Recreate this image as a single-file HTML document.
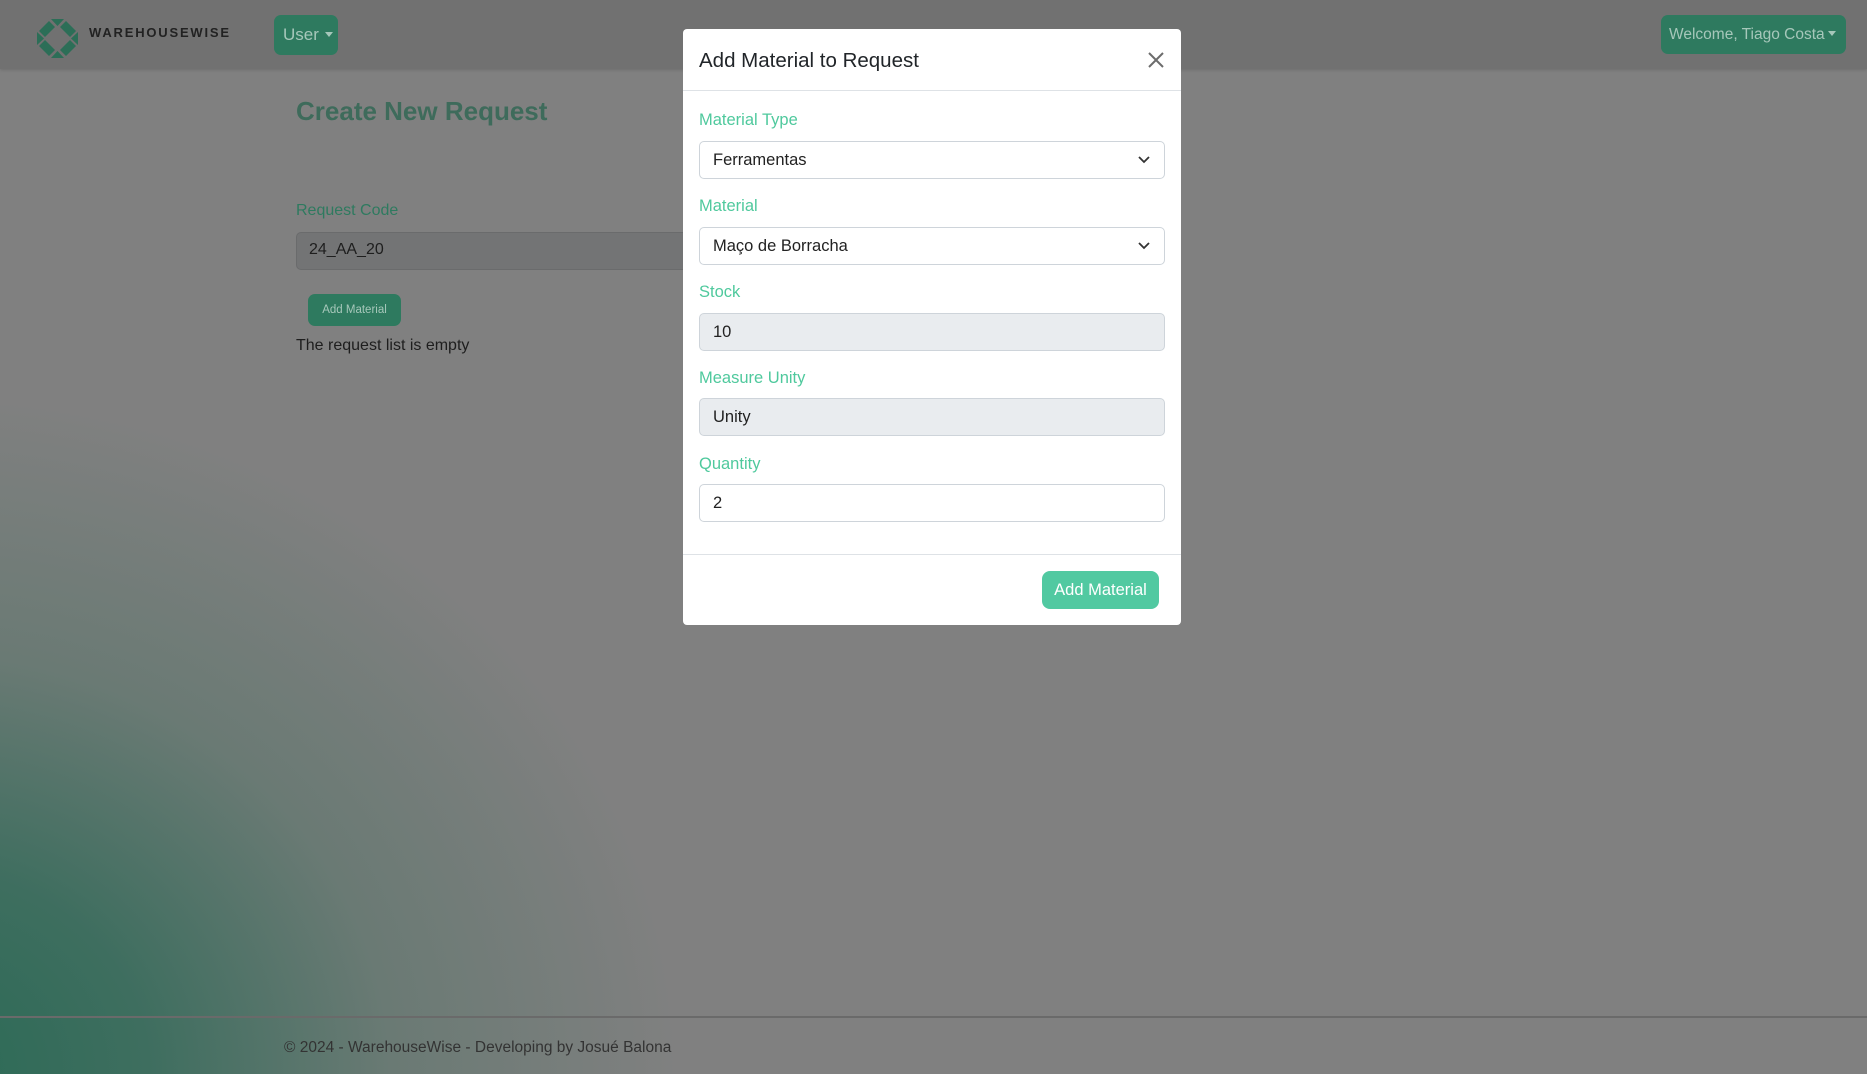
<!DOCTYPE html>
<html><head><meta charset="utf-8"><style>
*{box-sizing:border-box;margin:0;padding:0}
body{width:1867px;height:1074px;overflow:hidden;position:relative;font-family:"Liberation Sans",sans-serif;background:#808080}
.grad{position:absolute;left:0;top:0;width:1867px;height:1074px;background:radial-gradient(ellipse 760px 680px at -80px 1074px,#2a6a55 0%,#3e6e5f 30%,#6a7a74 62%,rgba(128,128,128,0) 100%)}
.nav{position:absolute;left:0;top:0;width:1867px;height:69px;background:#717171;box-shadow:0 1px 3px rgba(0,0,0,.15)}
.btn{position:absolute;background:#2e7a5f;color:#a6c7ba;border-radius:7px;font-size:17px;line-height:40px;padding:0 9px;white-space:nowrap}
.car{display:inline-block;width:0;height:0;border-left:4px solid transparent;border-right:4px solid transparent;border-top:5px solid #a6c7ba;vertical-align:3px;margin-left:6px}
.t{position:absolute;white-space:nowrap}
.foot{position:absolute;left:0;top:1016px;width:1867px;height:2px;background:#6a6a6a}
.modal{position:absolute;left:683px;top:29px;width:498px;height:596px;background:#fff;border-radius:4px}
.mh{height:62px;border-bottom:1px solid #dee2e6;position:relative}
.lbl{position:absolute;left:16px;color:#4fc99d;font-size:16.5px}
.inp{position:absolute;left:16px;width:466px;height:38px;border:1px solid #ced4da;border-radius:5px;font-size:16.5px;color:#222;padding-left:13px;line-height:36px;background:#fff}
.dis{background:#e9ecef}
</style></head><body>
<div class="grad"></div>
<div class="nav">
<svg style="position:absolute;left:37px;top:19px" width="41" height="39" viewBox="0 0 41 39"><g fill="#2c6e57"><path d="M14 0H27L20.5 7ZM0 13V26L7 19.5ZM41 13V26L34 19.5ZM14 39H27L20.5 32Z"/><path d="M12 2L2 12 8 18 18 8Z M29 2L39 12 33 18 23 8Z M12 37L2 27 8 21 18 31Z M29 37L39 27 33 21 23 31Z"/></g></svg>
<div class="t" style="left:89px;top:25px;font-size:13px;font-weight:bold;letter-spacing:1.8px;color:#222">WAREHOUSEWISE</div>
<div class="btn" style="left:274px;top:15px;height:40px;width:64px">User<span class="car"></span></div>
<div class="btn" style="left:1661px;top:15px;height:39px;width:185px;font-size:15.5px;padding:0 8px">Welcome, Tiago Costa<span class="car" style="margin-left:3px"></span></div>
</div>
<div class="t" style="left:296px;top:96px;font-size:26px;font-weight:bold;color:#3e6b5b">Create New Request</div>
<div class="t" style="left:296px;top:202px;font-size:16px;color:#2e7a5f">Request Code</div>
<div style="position:absolute;left:296px;top:232px;width:700px;height:38px;background:#737475;border:1px solid #6a6b6c;border-radius:5px"></div>
<div class="t" style="left:309px;top:241px;font-size:16px;color:#1e1e1e">24_AA_20</div>
<div class="btn" style="left:308px;top:294px;height:32px;line-height:32px;font-size:11.5px;padding:0 12px;width:93px;text-align:center">Add Material</div>
<div class="t" style="left:296px;top:337px;font-size:16px;color:#1e1e1e">The request list is empty</div>
<div class="foot"></div>
<div class="t" style="left:284px;top:1039px;font-size:15.5px;color:#333">© 2024 - WarehouseWise - Developing by Josué Balona</div>
<div class="modal">
<div class="mh"><div class="t" style="left:16px;top:20px;font-size:20.5px;color:#212529">Add Material to Request</div>
<svg style="position:absolute;left:465px;top:23px" width="16" height="16" viewBox="0 0 16 16"><path d="M1 1L15 15M15 1L1 15" stroke="#6c6c6c" stroke-width="2"/></svg></div>
<div class="lbl" style="top:82px">Material Type</div>
<div class="inp" style="top:112px">Ferramentas<svg style="position:absolute;right:14px;top:14px" width="12" height="8" viewBox="0 0 12 8"><path d="M1 1L6 6 11 1" stroke="#333" stroke-width="1.8" fill="none"/></svg></div>
<div class="lbl" style="top:168px">Material</div>
<div class="inp" style="top:198px">Maço de Borracha<svg style="position:absolute;right:14px;top:14px" width="12" height="8" viewBox="0 0 12 8"><path d="M1 1L6 6 11 1" stroke="#333" stroke-width="1.8" fill="none"/></svg></div>
<div class="lbl" style="top:254px">Stock</div>
<div class="inp dis" style="top:284px">10</div>
<div class="lbl" style="top:340px">Measure Unity</div>
<div class="inp dis" style="top:369px">Unity</div>
<div class="lbl" style="top:426px">Quantity</div>
<div class="inp" style="top:455px">2</div>
<div style="position:absolute;left:0;top:525px;width:498px;height:1px;background:#dee2e6"></div>
<div style="position:absolute;left:359px;top:542px;width:117px;height:38px;background:#51c9a1;border-radius:8px;color:#fff;font-size:16.5px;line-height:38px;text-align:center">Add Material</div>
</div>
</body></html>
